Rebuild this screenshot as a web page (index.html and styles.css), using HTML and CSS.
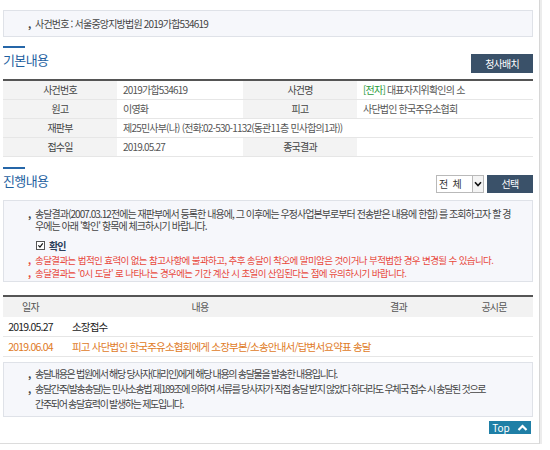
FILE: index.html
```html
<!DOCTYPE html>
<html lang="ko">
<head>
<meta charset="utf-8">
<title>사건 조회</title>
<link rel="stylesheet" href="styles.css">
</head>
<body>
<div class="frame">
  <div class="case-box"><span class="bullet">,</span>사건번호 : 서울중앙지방법원 2019가합534619</div>

  <div class="section-head">
    <h2 class="title">기본내용</h2>
    <span class="btn-dark btn-map">청사배치</span>
  </div>

  <table class="info">
    <colgroup><col class="c-label"><col class="c-val1"><col class="c-label"><col></colgroup>
    <tr><th>사건번호</th><td>2019가합534619</td><th>사건명</th><td><span class="tag">[전자]</span> 대표자지위확인의 소</td></tr>
    <tr><th>원고</th><td>이영화</td><th>피고</th><td>사단법인 한국주유소협회</td></tr>
    <tr><th>재판부</th><td colspan="3" class="wide">제25민사부(나) (전화:02-530-1132(동관11층 민사합의1과))</td></tr>
    <tr><th>접수일</th><td>2019.05.27</td><th>종국결과</th><td></td></tr>
  </table>

  <div class="section-head head2">
    <h2 class="title">진행내용</h2>
    <div class="filter">
      <div class="select"><span class="select-text">전 체</span><span class="select-arrow"><svg width="8" height="6" viewBox="0 0 8 6"><path d="M1 1.2 L4 4.5 L7 1.2" fill="none" stroke="#111" stroke-width="1.6"/></svg></span></div>
      <span class="btn-dark btn-select">선택</span>
    </div>
  </div>

  <div class="notice notice1">
    <ul class="list first">
      <li>송달결과(2007.03.12전에는 재판부에서 등록한 내용에, 그 이후에는 우정사업본부로부터 전송받은 내용에 한함) 를 조회하고자 할 경우에는 아래 '확인' 항목에 체크하시기 바랍니다.</li>
    </ul>
    <div class="check"><span class="cbox"><svg width="9" height="9" viewBox="0 0 9 9"><path d="M1.8 4.4 L3.8 6.6 L7.4 1.8" fill="none" stroke="#111" stroke-width="1.5"/></svg></span><span class="check-label">확인</span></div>
    <ul class="list red">
      <li>송달결과는 법적인 효력이 없는 참고사항에 불과하고, 추후 송달이 착오에 말미암은 것이거나 부적법한 경우 변경될 수 있습니다.</li>
      <li>송달결과는 '0시 도달' 로 나타나는 경우에는 기간 계산 시 초일이 산입된다는 점에 유의하시기 바랍니다.</li>
    </ul>
  </div>

  <table class="history">
    <colgroup><col class="h1"><col class="h2"><col class="h3"><col class="h4"></colgroup>
    <tr><th>일자</th><th>내용</th><th>결과</th><th>공시문</th></tr>
    <tr><td class="date">2019.05.27</td><td class="content">소장접수</td><td></td><td></td></tr>
    <tr class="orange"><td class="date">2019.06.04</td><td class="content">피고 사단법인 한국주유소협회에게 소장부본/소송안내서/답변서요약표 송달</td><td></td><td></td></tr>
  </table>

  <div class="notice notice2">
    <ul class="list">
      <li>송달내용은 법원에서 해당 당사자(대리인)에게 해당 내용의 송달물을 발송한 내용입니다.</li>
      <li>송달간주(발송송달)는 민사소송법 제189조에 의하여 서류를 당사자가 직접 송달 받지 않았다 하더라도 우체국 접수 시 송달된 것으로<br>간주되어 송달효력이 발생하는 제도입니다.</li>
    </ul>
  </div>

  <div class="top-row">
    <a class="top-btn" href="#">Top <svg width="11" height="7" viewBox="0 0 11 7"><path d="M1.5 6 L5.5 2 L9.5 6" fill="none" stroke="#fff" stroke-width="2.2"/></svg></a>
  </div>
</div>
</body>
</html>
```

FILE: styles.css
```css
* { box-sizing: border-box; }
html, body { margin: 0; padding: 0; background: #fff; }
body {
  font-family: "Noto Sans CJK KR", "Noto Sans", sans-serif;
  font-size: 10px;
  letter-spacing: -0.8px;
  color: #444;
}
.frame {
  width: 540px;
  padding: 10px 6px 9px 3px;
  border-right: 1px solid #d6d6d6;
  border-bottom: 1px solid #dcdcdc;
  box-shadow: 2px 0 0 #ececec;
}
.case-box {
  height: 27px;
  line-height: 25px;
  padding-left: 24px;
  background: #f6f7fb;
  border: 1px solid #dfe2e8;
  color: #444;
}
.bullet {
  display: inline-block;
  width: 7px;
  font-weight: bold;
}
.section-head {
  margin-top: 9px;
  display: flex;
  justify-content: space-between;
  align-items: flex-start;
  height: 27px;
}
.title {
  margin: 0;
  font-size: 13px;
  font-weight: normal;
  color: #1e5f9f;
  line-height: 18px;
  letter-spacing: -0.6px;
}
.title::before {
  content: "";
  display: block;
  width: 22px;
  height: 2px;
  background: #2566a8;
  margin-bottom: 3px;
}
.btn-dark {
  display: inline-block;
  background: #3a5169;
  color: #fff;
  text-align: center;
  font-size: 10px;
}
.btn-map {
  align-self: flex-end;
  width: 62px;
  height: 19px;
  line-height: 19px;
}
.info {
  margin-top: 6px;
  width: 530px;
  table-layout: fixed;
  border-collapse: collapse;
  border-top: 2px solid #555;
}
.c-label { width: 114px; }
.c-val1 { width: 126px; }
.info th, .info td {
  height: 19px;
  padding: 0 0 0 6px;
  border-bottom: 1px solid #e6e6e6;
  font-weight: normal;
  white-space: nowrap;
  text-align: left;
  color: #555;
}
.info th {
  background: #f3f3f3;
  text-align: center;
  padding: 0;
  color: #444;
}
.info td.wide { letter-spacing: -0.8px; }
.tag { color: #2b9a3c; }
.head2 {
  margin-top: 10px;
  height: 26px;
}
.filter {
  align-self: flex-end;
  display: flex;
  gap: 3px;
}
.select {
  width: 48px;
  height: 18px;
  border: 1px solid #b9b9b9;
  background: #fff;
  display: flex;
  justify-content: space-between;
}
.select-text {
  padding-left: 2px;
  line-height: 16px;
  color: #333;
  word-spacing: 3px;
}
.select-arrow {
  width: 11px;
  border-left: 1px solid #b9b9b9;
  display: flex;
  align-items: center;
  justify-content: center;
  background: #f4f4f4;
}
.btn-select {
  width: 46px;
  height: 18px;
  line-height: 18px;
}
.notice {
  margin-top: 7px;
  background: #f6f7fb;
  border: 1px solid #dfe2e8;
}
.notice1 {
  height: 82px;
  padding-top: 7px;
  letter-spacing: -0.95px;
}
.list {
  list-style: none;
  margin: 0;
  padding: 0 6px 0 31px;
  line-height: 12px;
}
.list.first {
  padding-right: 21px;
  word-break: break-all;
}
.list li::before {
  content: ",";
  display: inline-block;
  width: 7px;
  margin-left: -7px;
  font-weight: bold;
  color: #444;
}
.check {
  margin-top: 7px;
  padding-left: 32px;
  display: flex;
  align-items: center;
  height: 14px;
}
.cbox {
  width: 9px;
  height: 9px;
  border: 1px solid #555;
  background: #fff;
  display: flex;
  align-items: center;
  justify-content: center;
  margin-right: 4px;
}
.cbox svg { display: block; }
.check-label {
  color: #2c3e5a;
  font-weight: bold;
}
.red {
  margin-top: 1px;
  color: #e8473c;
  font-size: 9.5px;
  letter-spacing: -0.6px;
  line-height: 13.8px;
}
.red li::before { color: #e8473c; }
.history {
  margin-top: 13px;
  width: 530px;
  table-layout: fixed;
  border-collapse: collapse;
  border-top: 2px solid #555;
}
.h1 { width: 55px; }
.h2 { width: 284px; }
.h3 { width: 113px; }
.h4 { width: 78px; }
.history th {
  background: #f2f2f2;
  font-weight: normal;
  height: 21px;
  color: #555;
  padding: 0;
}
.history td {
  height: 20px;
  border-bottom: 1px solid #e6e6e6;
  color: #222;
  white-space: nowrap;
  font-size: 10.5px;
}
.history td.date { text-align: center; }
.history td.content { padding-left: 14px; }
.history .orange td { color: #e07b1f; }
.notice2 {
  margin-top: 5px;
  height: 55px;
  padding-top: 3px;
  letter-spacing: -1.3px;
}
.notice2 .list { line-height: 15px; }
.top-row {
  margin-top: 4px;
  display: flex;
  justify-content: flex-end;
  padding-right: 2px;
}
.top-btn {
  display: flex;
  align-items: center;
  justify-content: center;
  gap: 7px;
  width: 42px;
  height: 13px;
  background: #1f7fa6;
  color: #fff;
  text-decoration: none;
  font-size: 10px;
  letter-spacing: 0;
}
.top-btn svg { display: block; }
```
